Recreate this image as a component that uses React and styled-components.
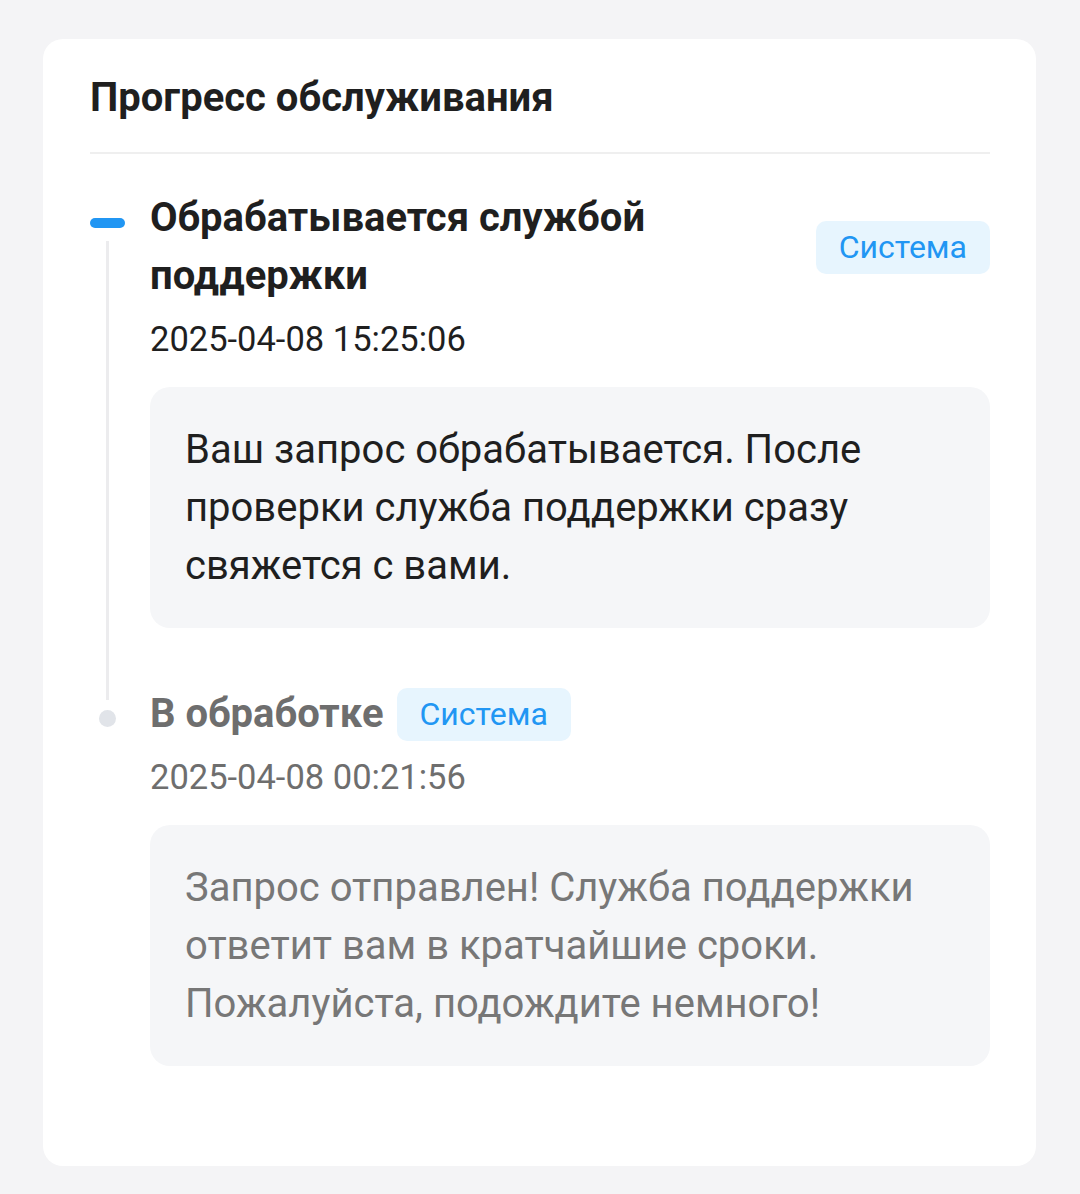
import React from "react";
import styled, { createGlobalStyle } from "styled-components";

const Global = createGlobalStyle`
  html, body { margin: 0; padding: 0; background: #f4f4f6; }
  body { font-family: Roboto, "Noto Sans", "Liberation Sans", sans-serif; -webkit-font-smoothing: antialiased; }
`;

const Page = styled.div`
  padding: 39px 44px 28px 43px;
`;

const Card = styled.section`
  background: #ffffff;
  border-radius: 20px;
  padding: 39px 46px 100px 47px;
`;

const Heading = styled.h2`
  margin: 0;
  font-size: 40px;
  line-height: 40px;
  font-weight: 700;
  color: #1f1f1f;
`;

const Divider = styled.hr`
  border: none;
  height: 2px;
  background: #efefef;
  margin: 34px 0 35px;
`;

const Item = styled.div`
  display: grid;
  grid-template-columns: 60px 1fr;
  padding-bottom: ${(p) => (p.$last ? "0" : "57px")};
`;

const Rail = styled.div`
  display: flex;
  flex-direction: column;
  align-items: center;
  width: 35px;
  padding-top: ${(p) => (p.$active ? "29px" : "25px")};
`;

const Dash = styled.span`
  display: block;
  flex-shrink: 0;
  width: 35px;
  height: 10px;
  border-radius: 5px;
  background: #2196f3;
`;

const Dot = styled.span`
  display: block;
  flex-shrink: 0;
  width: 17px;
  height: 17px;
  border-radius: 50%;
  background: #e1e4e9;
`;

const Line = styled.span`
  display: block;
  width: 3px;
  flex: 1 1 auto;
  margin-top: 13px;
  margin-bottom: -72px;
  background: #ececee;
`;

const Body = styled.div`
  min-width: 0;
`;

const Header = styled.div`
  display: flex;
  align-items: center;
  gap: 13px;
`;

const Title = styled.div`
  font-size: 40px;
  line-height: 58px;
  font-weight: 700;
  color: ${(p) => (p.$muted ? "#6e6e6e" : "#1f1f1f")};
  flex: 0 1 auto;
`;

const Badge = styled.span`
  flex-shrink: 0;
  margin-left: ${(p) => (p.$inline ? "0" : "auto")};
  background: #e7f5fe;
  color: #2196f3;
  font-size: 32px;
  line-height: 53px;
  padding: 0 23px;
  border-radius: 10px;
`;

const Time = styled.div`
  font-size: 34.5px;
  line-height: 40px;
  margin-top: 14px;
  color: ${(p) => (p.$muted ? "#6e6e6e" : "#1f1f1f")};
`;

const Note = styled.div`
  margin-top: 28px;
  background: #f5f6f8;
  border-radius: 20px;
  padding: 34px 35px 33px 35px;
  font-size: 40px;
  line-height: 58px;
  color: ${(p) => (p.$muted ? "#777777" : "#1f1f1f")};
`;

const events = [
  {
    title: "Обрабатывается службой поддержки",
    time: "2025-04-08 15:25:06",
    text: "Ваш запрос обрабатывается. После проверки служба поддержки сразу свяжется с вами.",
    active: true,
  },
  {
    title: "В обработке",
    time: "2025-04-08 00:21:56",
    text: "Запрос отправлен! Служба поддержки ответит вам в кратчайшие сроки. Пожалуйста, подождите немного!",
    active: false,
  },
];

export default function App() {
  return (
    <>
      <Global />
      <Page>
        <Card>
          <Heading>Прогресс обслуживания</Heading>
          <Divider />
          {events.map((e, i) => {
            const last = i === events.length - 1;
            return (
              <Item key={i} $last={last}>
                <Rail $active={e.active}>
                  {e.active ? <Dash /> : <Dot />}
                  {!last && <Line />}
                </Rail>
                <Body>
                  <Header>
                    <Title $muted={!e.active}>{e.title}</Title>
                    <Badge $inline={!e.active}>Система</Badge>
                  </Header>
                  <Time $muted={!e.active}>{e.time}</Time>
                  <Note $muted={!e.active}>{e.text}</Note>
                </Body>
              </Item>
            );
          })}
        </Card>
      </Page>
    </>
  );
}
